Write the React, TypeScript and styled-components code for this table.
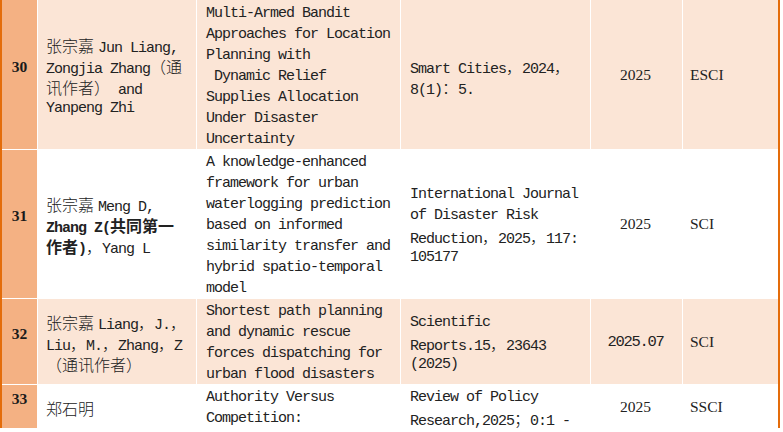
import React from "react";
import styled, { createGlobalStyle } from "styled-components";

const Global = createGlobalStyle`
  html, body { margin: 0; padding: 0; background: #ffffff; }
  #root { width: 783px; height: 432px; overflow: hidden; }
`;

const ORANGE = "#E46C0A";
const NUM_BG = "#F4B183";
const PEACH = "#FBE5D6";

const Table = styled.div`
  width: 776px;
  display: flex;
  flex-direction: column;
  gap: 1px;
  border-left: 2px solid ${ORANGE};
  border-right: 2px solid ${ORANGE};
  background: #ffffff;
  color: #222222;
`;

const Row = styled.div<{ $first?: boolean }>`
  display: grid;
  grid-template-columns: 35px 158px 203px 189px 91px 95px;
  column-gap: 1px;
  padding-top: 0;
`;

const NumCell = styled.div`
  background: ${NUM_BG};
  display: flex;
  align-items: center;
  justify-content: center;
  padding-bottom: 16px;
  font-family: "Liberation Serif", serif;
  font-weight: 700;
  font-size: 15.5px;
  color: #1a1a1a;
`;

const TextCell = styled.div<{ $shade: boolean; $padLeft: number; $padTop: number }>`
  background: ${(p) => (p.$shade ? PEACH : "#ffffff")};
  display: flex;
  flex-direction: column;
  justify-content: center;
  padding: ${(p) => p.$padTop}px 0 0 ${(p) => p.$padLeft}px;
  font-family: "Liberation Mono", monospace;
  font-size: 15px;
  letter-spacing: -1px;
  white-space: pre;
`;

const Line = styled.div`
  box-sizing: border-box;
  height: 21px;
  padding-top: 1px;
  line-height: 21px;
`;

const Han = styled.span`
  font-family: "Noto Sans CJK SC", sans-serif;
  font-size: 16px;
  font-weight: 300;
  letter-spacing: 0;
  line-height: 21px;
`;

const Bold = styled.span`
  font-weight: 700;
  & > span {
    font-weight: 700;
  }
`;

const YearCell = styled.div<{ $shade: boolean; $mono: boolean }>`
  background: ${(p) => (p.$shade ? PEACH : "#ffffff")};
  display: flex;
  align-items: center;
  justify-content: center;
  padding-right: 2px;
  font-family: ${(p) => (p.$mono ? `"Liberation Mono", monospace` : `"Liberation Serif", serif`)};
  font-size: 15.5px;
  letter-spacing: ${(p) => (p.$mono ? "-1.3px" : "0")};
`;

const IndexCell = styled.div<{ $shade: boolean }>`
  background: ${(p) => (p.$shade ? PEACH : "#ffffff")};
  display: flex;
  align-items: center;
  padding-left: 7px;
  font-family: "Liberation Serif", serif;
  font-size: 15.5px;
`;

type Part = string | { b: string };
type LineData = Part[] | string;

interface RowData {
  n: string;
  shade: boolean;
  authors: LineData[];
  title: LineData[];
  journal: LineData[];
  year: string;
  yearMono?: boolean;
  index: string;
}

const SP = "\u2005";

const rows: RowData[] = [
  {
    n: "30",
    shade: true,
    authors: [`张宗嘉${SP}Jun Liang,`, "Zongjia Zhang（通", "讯作者） and", "Yanpeng Zhi"],
    title: [
      "Multi-Armed Bandit",
      "Approaches for Location",
      "Planning with",
      " Dynamic Relief",
      "Supplies Allocation",
      "Under Disaster",
      "Uncertainty",
    ],
    journal: ["Smart Cities，2024，", "8(1)：5."],
    year: "2025",
    index: "ESCI",
  },
  {
    n: "31",
    shade: false,
    authors: [`张宗嘉${SP}Meng D,`, [{ b: "Zhang Z(共同第一" }], [{ b: "作者)" }, "，Yang L"]],
    title: [
      "A knowledge-enhanced",
      "framework for urban",
      "waterlogging prediction",
      "based on informed",
      "similarity transfer and",
      "hybrid spatio-temporal",
      "model",
    ],
    journal: ["International Journal", "of Disaster Risk", "Reduction，2025，117:", "105177"],
    year: "2025",
    index: "SCI",
  },
  {
    n: "32",
    shade: true,
    authors: [`张宗嘉${SP}Liang，J.，`, "Liu，M.，Zhang，Z", "（通讯作者）"],
    title: [
      "Shortest path planning",
      "and dynamic rescue",
      "forces dispatching for",
      "urban flood disasters",
    ],
    journal: ["Scientific", "Reports.15，23643", "(2025)"],
    year: "2025.07",
    yearMono: true,
    index: "SCI",
  },
  {
    n: "33",
    shade: false,
    authors: ["郑石明"],
    title: ["Authority Versus", "Competition:"],
    journal: ["Review of Policy", "Research,2025；0:1 -"],
    year: "2025",
    index: "SSCI",
  },
];

const CJK = /([\u2000-\u200a\u3000-\u303f\u4e00-\u9fff\uff00-\uffef]+)/;

function renderRuns(text: string, key: string) {
  return text.split(CJK).map((seg, i) =>
    seg === "" ? null : CJK.test(seg) ? (
      <Han key={`${key}-${i}`}>{seg}</Han>
    ) : (
      <React.Fragment key={`${key}-${i}`}>{seg}</React.Fragment>
    )
  );
}

function renderLine(line: LineData, idx: number) {
  const parts: Part[] = typeof line === "string" ? [line] : line;
  return (
    <Line key={idx}>
      {parts.map((p, i) =>
        typeof p === "string" ? (
          <React.Fragment key={i}>{renderRuns(p, `${idx}-${i}`)}</React.Fragment>
        ) : (
          <Bold key={i}>{renderRuns(p.b, `${idx}-${i}b`)}</Bold>
        )
      )}
    </Line>
  );
}

export default function App() {
  return (
    <>
      <Global />
      <Table>
        {rows.map((r, i) => {
          const padTop = i === 0 ? 2 : 1;
          return (
            <Row key={r.n}>
              <NumCell>{r.n}</NumCell>
              <TextCell $shade={r.shade} $padLeft={8} $padTop={padTop}>
                {r.authors.map(renderLine)}
              </TextCell>
              <TextCell $shade={r.shade} $padLeft={9} $padTop={padTop}>
                {r.title.map(renderLine)}
              </TextCell>
              <TextCell $shade={r.shade} $padLeft={9} $padTop={padTop}>
                {r.journal.map(renderLine)}
              </TextCell>
              <YearCell $shade={r.shade} $mono={!!r.yearMono}>
                {r.year}
              </YearCell>
              <IndexCell $shade={r.shade}>{r.index}</IndexCell>
            </Row>
          );
        })}
      </Table>
    </>
  );
}
